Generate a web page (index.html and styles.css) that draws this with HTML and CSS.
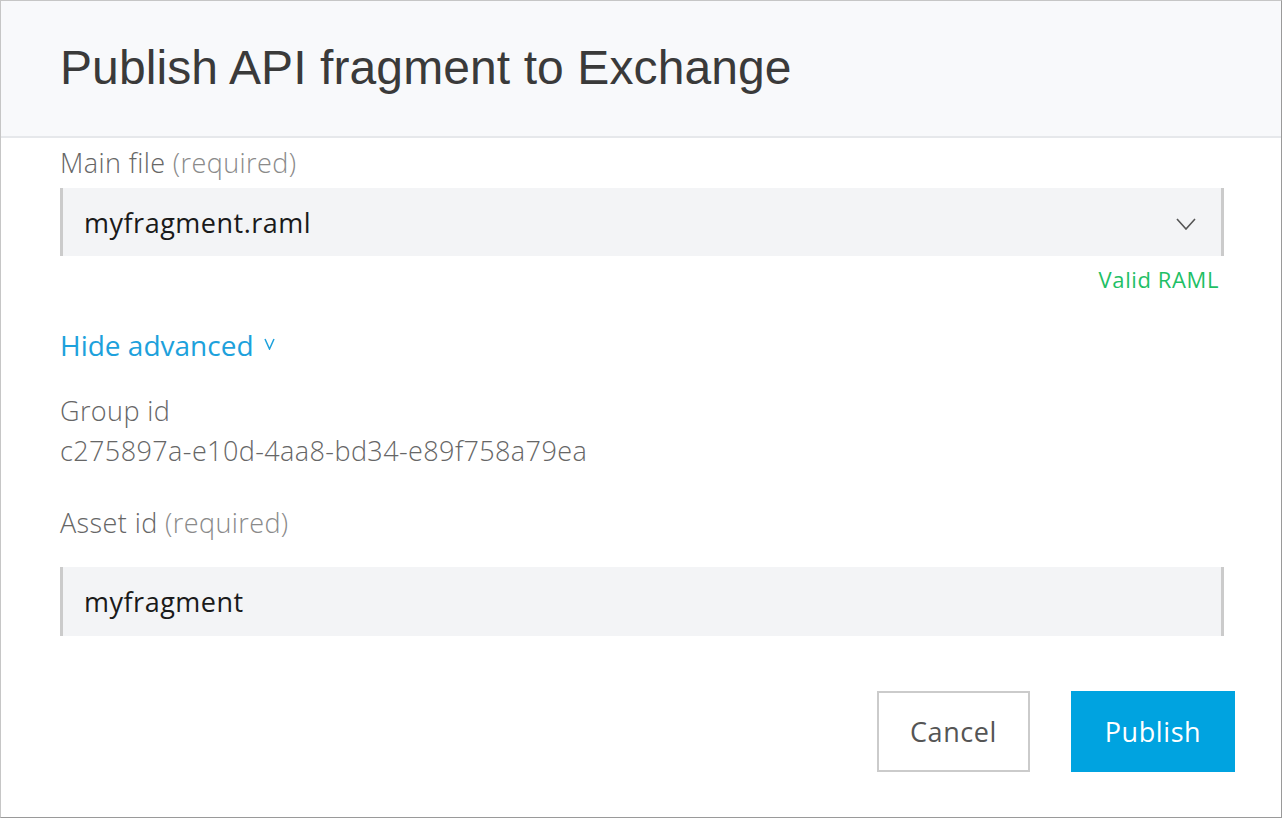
FILE: index.html
```html
<!DOCTYPE html>
<html>
<head>
<meta charset="utf-8">
<link rel="stylesheet" href="styles.css">
</head>
<body>
<div class="dialog">
  <div class="header">
    <h1 class="title">Publish API fragment to Exchange</h1>
  </div>
  <div class="content">
    <div class="label label-main">Main file <span class="req">(required)</span></div>
    <div class="field select">
      <span class="value">myfragment.raml</span>
      <svg class="chev" width="20" height="12" viewBox="0 0 20 12"><path d="M1 1 L10 11 L19 1" fill="none" stroke="#555" stroke-width="1.6"/></svg>
    </div>
    <div class="valid">Valid RAML</div>
    <div class="advanced">Hide advanced
      <svg class="caret" width="11" height="12" viewBox="0 0 11 12"><path d="M1 1 L5.5 11 L10 1" fill="none" stroke="#1da1dc" stroke-width="1.5"/></svg>
    </div>
    <div class="label label-group">Group id</div>
    <div class="label label-uuid">c275897a-e10d-4aa8-bd34-e89f758a79ea</div>
    <div class="label label-asset">Asset id <span class="req">(required)</span></div>
    <div class="field input"><span class="value">myfragment</span></div>
    <div class="footer">
      <button class="btn cancel">Cancel</button>
      <button class="btn publish">Publish</button>
    </div>
  </div>
</div>
</body>
</html>
```

FILE: styles.css
```css
html, body {
  margin: 0;
  padding: 0;
  background: #fff;
}
.dialog {
  box-sizing: border-box;
  width: 1282px;
  height: 818px;
  border: 1px solid #c6c6c6;
  border-right-color: #9a9a9a;
  border-bottom-color: #9a9a9a;
  background: #fff;
  font-family: "Open Sans", sans-serif;
}
.header {
  height: 135px;
  background: #f8f9fb;
  border-bottom: 2px solid #e6e8eb;
  display: flex;
  align-items: center;
  padding-left: 59px;
}
.title {
  margin: 0;
  font-family: "Liberation Sans", Arial, sans-serif;
  font-weight: normal;
  font-size: 48px;
  color: #3a3a3a;
  letter-spacing: 0.1px;
  position: relative;
  top: -1px;
}
.content {
  padding: 0 57px 0 59px;
}
.label {
  font-size: 27px;
  font-weight: 300;
  color: #666;
  line-height: 32px;
  letter-spacing: 0.4px;
}
.req { color: #8a8a8a; }
.label-main { margin-top: 9px; }
.field {
  box-sizing: border-box;
  height: 68px;
  background: #f3f4f6;
  border-left: 3px solid #cbcbcb;
  border-right: 3px solid #cbcbcb;
  display: flex;
  align-items: center;
  padding: 0 25px 0 21px;
  font-size: 27px;
  letter-spacing: 0.5px;
  color: #1a1a1a;
}
.select {
  margin-top: 9px;
  justify-content: space-between;
}
.chev { display: block; margin-top: 3px; }
.valid {
  margin-top: 8px;
  text-align: right;
  padding-right: 5px;
  font-size: 22px;
  letter-spacing: 0.6px;
  line-height: 30px;
  color: #1fbf66;
}
.advanced {
  margin-top: 33px;
  font-size: 28px;
  line-height: 36px;
  color: #1da1dc;
  display: flex;
  align-items: center;
  gap: 10px;
}
.caret { display: block; margin-top: -3px; }
.label-group { margin-top: 32px; }
.label-uuid { margin-top: 8px; }
.label-asset { margin-top: 40px; }
.input {
  margin-top: 28px;
  height: 69px;
}
.footer {
  margin-top: 55px;
  margin-right: -11px;
  display: flex;
  justify-content: flex-end;
  gap: 41px;
}
.btn {
  box-sizing: border-box;
  height: 81px;
  font-family: "Open Sans", sans-serif;
  font-size: 27px;
  letter-spacing: 0.6px;
  padding: 0;
  margin: 0;
  cursor: pointer;
}
.cancel {
  width: 153px;
  background: #fff;
  border: 2px solid #cbcbcb;
  color: #555;
}
.publish {
  width: 164px;
  background: #00a3e0;
  border: none;
  color: #fff;
}
```
